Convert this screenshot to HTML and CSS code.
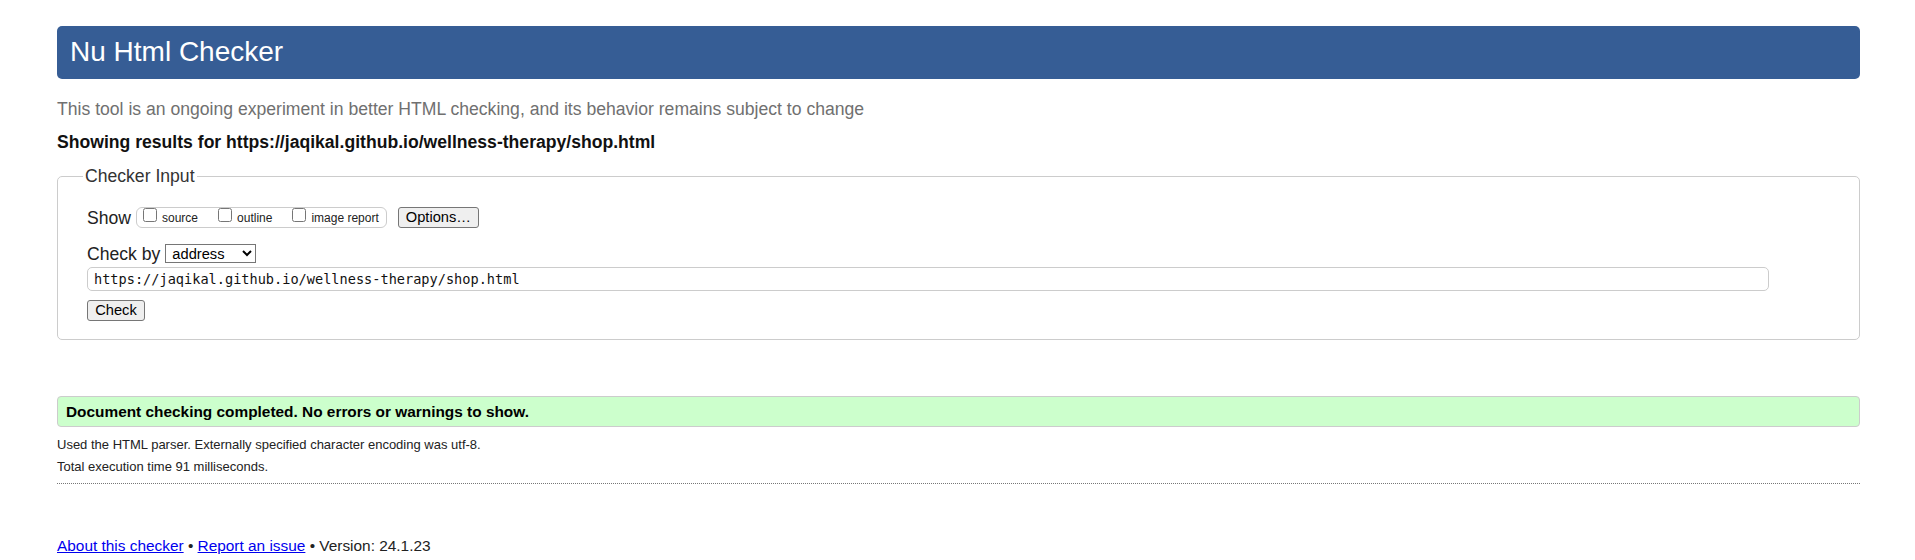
FILE: index.html
```html
<!DOCTYPE html>
<html lang="en">
<head>
<meta charset="utf-8">
<title>Showing results for https://jaqikal.github.io/wellness-therapy/shop.html - Nu Html Checker</title>
<link rel="stylesheet" href="styles.css">
</head>
<body class="page">
  <h1 class="title">Nu Html Checker</h1>
  <p class="intro">This tool is an ongoing experiment in better HTML checking, and its behavior remains subject to change</p>
  <p class="showing">Showing results for https://jaqikal.github.io/wellness-therapy/shop.html</p>
  <form class="checker-form">
    <fieldset class="checker-input">
      <legend class="legend">Checker Input</legend>
      <div class="row row-show">
        <span class="label-text">Show</span>
        <span class="show-group">
          <label class="opt"><input type="checkbox" class="cb"><span class="opt-text">source</span></label>
          <label class="opt"><input type="checkbox" class="cb"><span class="opt-text">outline</span></label>
          <label class="opt last"><input type="checkbox" class="cb"><span class="opt-text">image report</span></label>
        </span>
        <button type="button" class="btn btn-options">Options…</button>
      </div>
      <div class="row row-checkby">
        <span class="label-text">Check by</span>
        <select class="select">
          <option>address</option>
          <option>file upload</option>
          <option>text input</option>
        </select>
      </div>
      <div class="row row-url">
        <input type="url" class="url" value="https://jaqikal.github.io/wellness-therapy/shop.html">
      </div>
      <div class="row row-check">
        <button type="button" class="btn btn-check">Check</button>
      </div>
    </fieldset>
  </form>
  <div class="success"><p class="success-text">Document checking completed. No errors or warnings to show.</p></div>
  <p class="details first">Used the HTML parser. Externally specified character encoding was utf-8.</p>
  <p class="details">Total execution time 91 milliseconds.</p>
  <div class="rule"></div>
  <p class="footer"><a href="#" class="link">About this checker</a> • <a href="#" class="link">Report an issue</a> • Version: 24.1.23</p>
</body>
</html>
```

FILE: styles.css
```css
html, body {
  margin: 0;
  padding: 0;
  background: #ffffff;
}

.page {
  padding: 26px 55px 0 57px;
  font-family: "Liberation Sans", Arial, sans-serif;
  font-size: 17.6px;
  color: #222222;
}

.title {
  margin: 0;
  height: 53px;
  box-sizing: border-box;
  padding: 0 13px 2px;
  line-height: 51px;
  font-size: 28px;
  font-weight: normal;
  color: #ffffff;
  background: #365d95;
  border-radius: 5px;
}

.intro {
  margin: 20px 0 0;
  line-height: 20px;
  color: #707070;
}

.showing {
  margin: 13px 0 0;
  line-height: 20px;
  font-weight: bold;
  color: #111111;
}

.checker-form {
  margin: 14px 0 0;
}

.checker-input {
  margin: 0;
  padding: 0 29px 18px 29px;
  border: 1px solid #cccccc;
  border-radius: 5px;
  min-width: 0;
}

.legend {
  margin-left: -4px;
  padding: 0 2px;
  line-height: 20px;
  color: #333333;
}

.row {
  display: flex;
  align-items: center;
}

.row-show {
  margin-top: 21px;
  height: 21px;
}

.label-text {
  line-height: 20px;
  margin-right: 5px;
}

.show-group {
  display: inline-flex;
  align-items: flex-start;
  height: 21px;
  box-sizing: border-box;
  padding: 0 7px 0 6px;
  border: 1px solid #cccccc;
  border-radius: 6px;
}

.opt {
  display: inline-flex;
  align-items: flex-start;
  margin-right: 20px;
  font-size: 12px;
}

.opt.last {
  margin-right: 0;
}

.cb {
  width: 14px;
  height: 14px;
  margin: 0 5px 0 0;
}

.opt-text {
  padding-top: 3px;
  line-height: 14px;
}

.btn {
  height: 21px;
  box-sizing: border-box;
  padding: 0 7px;
  font-family: "Liberation Sans", Arial, sans-serif;
  font-size: 14.67px;
  line-height: 17px;
  color: #000000;
  background: #efefef;
  border: 1px solid #767676;
  border-radius: 3px;
}

.btn-options {
  margin-left: 11px;
  width: 81px;
}

.btn-check {
  width: 58px;
}

.row-checkby {
  margin-top: 16px;
  height: 19px;
}

.row-checkby .label-text {
  margin-right: 5px;
}

.select {
  width: 91px;
  height: 19px;
  box-sizing: border-box;
  padding: 0 0 0 2px;
  font-family: "Liberation Sans", Arial, sans-serif;
  font-size: 14.67px;
  color: #000000;
  background: #ffffff;
  border: 1px solid #767676;
  border-radius: 0;
}

.row-url {
  margin-top: 4px;
}

.url {
  width: calc(100% - 61px);
  height: 24px;
  box-sizing: border-box;
  margin: 0;
  padding: 0 6px;
  font-family: "DejaVu Sans Mono", "Liberation Mono", monospace;
  font-size: 13.6px;
  color: #111111;
  border: 1px solid #cccccc;
  border-radius: 5px;
  background: #ffffff;
}

.row-check {
  margin-top: 9px;
}

.success {
  margin-top: 56px;
  border: 1px solid #cccccc;
  border-radius: 4px;
  background: #ccffcc;
}

.success-text {
  margin: 0;
  padding: 0 8px;
  line-height: 29px;
  font-size: 15.4px;
  font-weight: bold;
  color: #000000;
}

.details {
  margin: 6px 0 0;
  font-size: 13px;
  line-height: 16px;
  color: #222222;
}

.details.first {
  margin-top: 9.5px;
}

.rule {
  margin-top: 8.5px;
  border-top: 1px dotted #777777;
}

.footer {
  margin: 52px 0 0;
  font-size: 15.4px;
  line-height: 20px;
  color: #222222;
}

.link {
  color: #0000ee;
  text-decoration: underline;
}
```
